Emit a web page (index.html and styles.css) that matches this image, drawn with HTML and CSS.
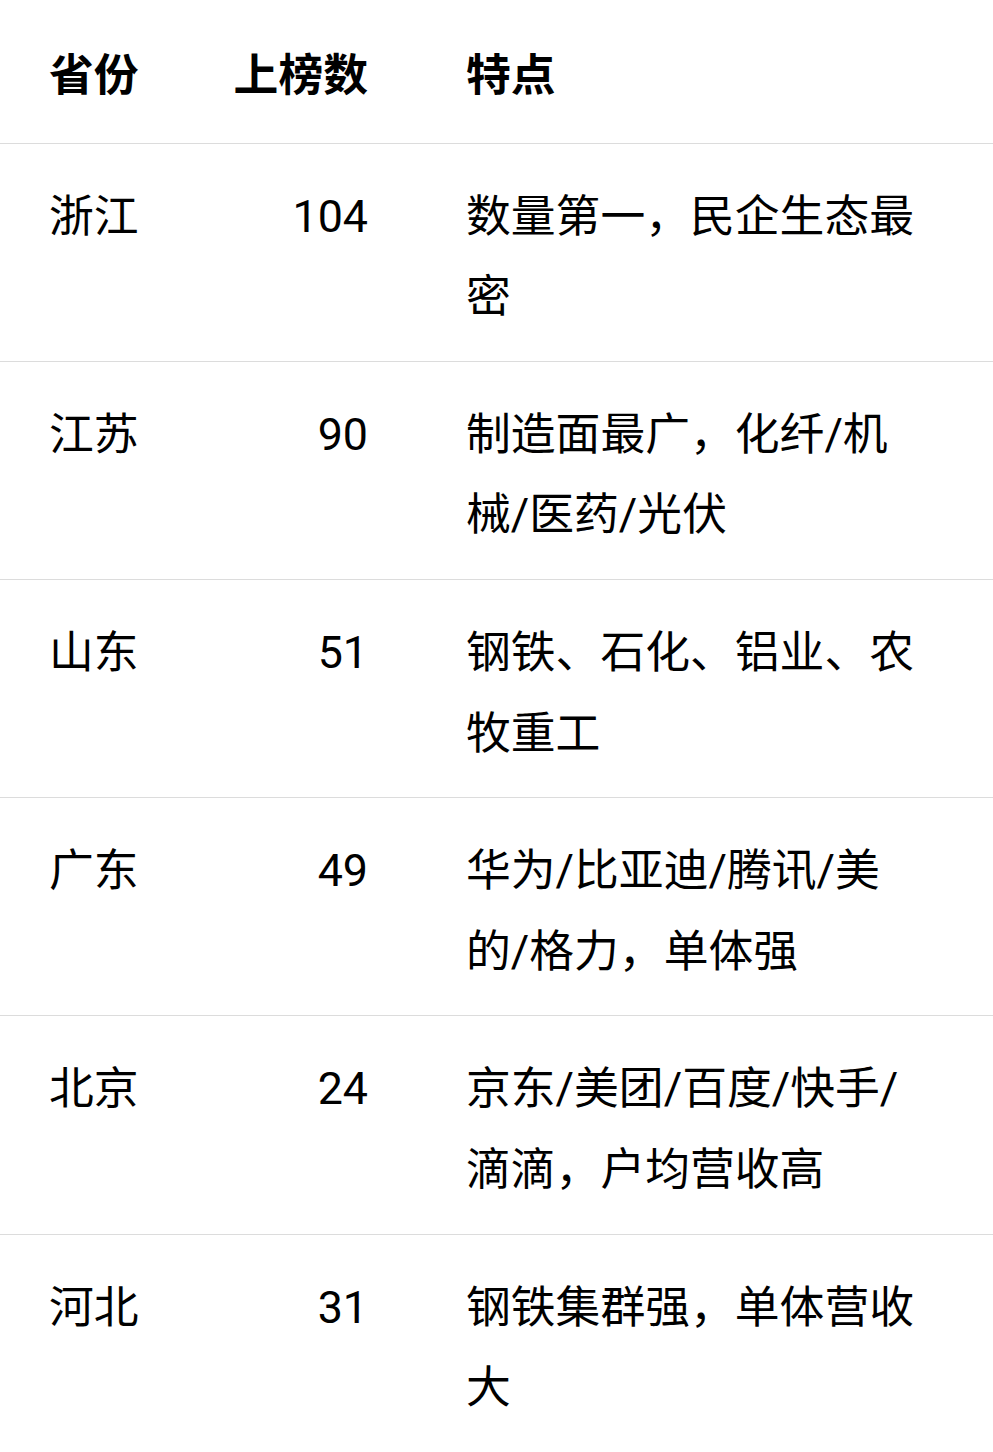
FILE: index.html
```html
<!DOCTYPE html>
<html lang="zh">
<head>
<meta charset="utf-8">
<link rel="stylesheet" href="styles.css">
</head>
<body>
<table class="rank">
  <thead>
    <tr><th class="c-prov">省份</th><th class="c-num">上榜数</th><th class="c-desc">特点</th></tr>
  </thead>
  <tbody>
    <tr><td class="c-prov">浙江</td><td class="c-num">104</td><td class="c-desc">数量第一，民企生态最密</td></tr>
    <tr><td class="c-prov">江苏</td><td class="c-num">90</td><td class="c-desc">制造面最广，化纤/机械/医药/光伏</td></tr>
    <tr><td class="c-prov">山东</td><td class="c-num">51</td><td class="c-desc">钢铁、石化、铝业、农牧重工</td></tr>
    <tr><td class="c-prov">广东</td><td class="c-num">49</td><td class="c-desc">华为/比亚迪/腾讯/美的/格力，单体强</td></tr>
    <tr><td class="c-prov">北京</td><td class="c-num">24</td><td class="c-desc">京东/美团/百度/快手/滴滴，户均营收高</td></tr>
    <tr><td class="c-prov">河北</td><td class="c-num">31</td><td class="c-desc">钢铁集群强，单体营收大</td></tr>
  </tbody>
</table>
</body>
</html>
```
FILE: styles.css
```css
html, body {
  margin: 0;
  padding: 0;
  background: #ffffff;
}
body {
  font-family: Roboto, "Noto Sans CJK SC", sans-serif;
  font-size: 44.8px;
  line-height: 80.6px;
  color: #000000;
}
.rank {
  border-collapse: collapse;
  width: 993px;
  table-layout: fixed;
}
.rank th, .rank td {
  vertical-align: top;
  padding: 33px 0 23px;
  border-bottom: 1px solid #dcdcdc;
  font-weight: 400;
}
.rank th {
  font-weight: 700;
  text-align: left;
  padding: 36px 0 26px;
}
.rank tbody tr:last-child td {
  border-bottom: none;
}
.rank .c-prov {
  width: 200px;
  padding-left: 49px;
  box-sizing: border-box;
}
.rank .c-num {
  text-align: right;
  width: 168px;
}
.rank .c-desc {
  padding-left: 98px;
  padding-right: 73px;
}
```
